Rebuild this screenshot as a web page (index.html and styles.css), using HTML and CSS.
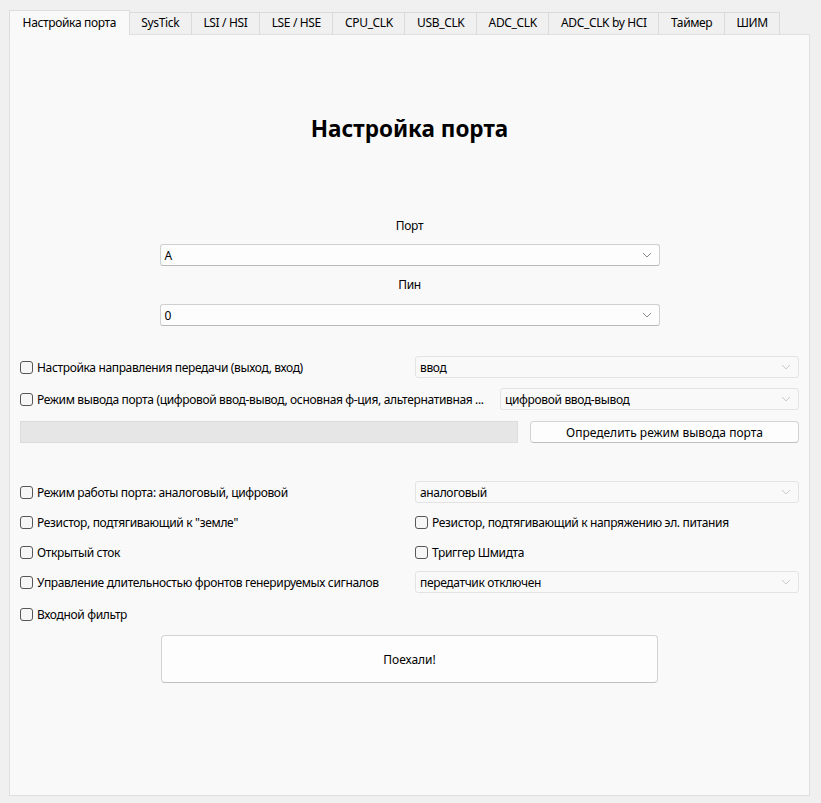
FILE: index.html
```html
<!DOCTYPE html>
<html lang="ru">
<head>
<meta charset="utf-8">
<title>Настройка порта</title>
<link rel="stylesheet" href="styles.css">
</head>
<body>
<div class="window">
  <div class="tabs">
    <div class="tab tab-active">Настройка порта</div>
    <div class="tab">SysTick</div>
    <div class="tab">LSI / HSI</div>
    <div class="tab">LSE / HSE</div>
    <div class="tab">CPU_CLK</div>
    <div class="tab">USB_CLK</div>
    <div class="tab">ADC_CLK</div>
    <div class="tab">ADC_CLK by HCI</div>
    <div class="tab">Таймер</div>
    <div class="tab">ШИМ</div>
  </div>
  <div class="pane">
    <h1 class="title">Настройка порта</h1>

    <div class="field-label label-port">Порт</div>
    <div class="combo combo-center"><span>A</span>
      <svg class="chev" width="10" height="6" viewBox="0 0 10 6"><path d="M1 1 L5 5 L9 1" fill="none" stroke="#8a8a8a" stroke-width="1"/></svg>
    </div>
    <div class="field-label label-pin">Пин</div>
    <div class="combo combo-center"><span>0</span>
      <svg class="chev" width="10" height="6" viewBox="0 0 10 6"><path d="M1 1 L5 5 L9 1" fill="none" stroke="#8a8a8a" stroke-width="1"/></svg>
    </div>

    <div class="row row-1">
      <label class="check"><span class="box"></span><span>Настройка направления передачи (выход, вход)</span></label>
      <div class="combo combo-off combo-right"><span>ввод</span>
        <svg class="chev" width="10" height="6" viewBox="0 0 10 6"><path d="M1 1 L5 5 L9 1" fill="none" stroke="#cacaca" stroke-width="1"/></svg>
      </div>
    </div>
    <div class="row row-2">
      <label class="check check-elide"><span class="box"></span><span>Режим вывода порта (цифровой ввод-вывод, основная ф-ция, альтернативная ...</span></label>
      <div class="combo combo-off combo-mode"><span>цифровой ввод-вывод</span>
        <svg class="chev" width="10" height="6" viewBox="0 0 10 6"><path d="M1 1 L5 5 L9 1" fill="none" stroke="#cacaca" stroke-width="1"/></svg>
      </div>
    </div>
    <div class="row row-3">
      <div class="progress"></div>
      <button class="btn btn-detect">Определить режим вывода порта</button>
    </div>

    <div class="row row-4">
      <label class="check"><span class="box"></span><span>Режим работы порта: аналоговый, цифровой</span></label>
      <div class="combo combo-off combo-right"><span>аналоговый</span>
        <svg class="chev" width="10" height="6" viewBox="0 0 10 6"><path d="M1 1 L5 5 L9 1" fill="none" stroke="#cacaca" stroke-width="1"/></svg>
      </div>
    </div>
    <div class="row row-pair">
      <label class="check"><span class="box"></span><span>Резистор, подтягивающий к "земле"</span></label>
      <label class="check"><span class="box"></span><span>Резистор, подтягивающий к напряжению эл. питания</span></label>
    </div>
    <div class="row row-pair">
      <label class="check"><span class="box"></span><span>Открытый сток</span></label>
      <label class="check"><span class="box"></span><span>Триггер Шмидта</span></label>
    </div>
    <div class="row row-7">
      <label class="check"><span class="box"></span><span>Управление длительностью фронтов генерируемых сигналов</span></label>
      <div class="combo combo-off combo-right"><span>передатчик отключен</span>
        <svg class="chev" width="10" height="6" viewBox="0 0 10 6"><path d="M1 1 L5 5 L9 1" fill="none" stroke="#cacaca" stroke-width="1"/></svg>
      </div>
    </div>
    <div class="row row-8">
      <label class="check"><span class="box"></span><span>Входной фильтр</span></label>
    </div>

    <button class="btn btn-go">Поехали!</button>
  </div>
</div>
</body>
</html>
```

FILE: styles.css
```css
* { box-sizing: border-box; }
html, body {
  margin: 0;
  padding: 0;
  background: #f0f0f0;
}
body {
  font-family: "Noto Sans", "Open Sans", "Liberation Sans", sans-serif;
  font-size: 12px;
  letter-spacing: -0.35px;
  color: #000;
  width: 821px;
  height: 803px;
  overflow: hidden;
}
.window {
  padding: 10px 11px 0 9px;
}
.tabs {
  display: flex;
  align-items: flex-end;
  height: 24px;
  position: relative;
  z-index: 2;
}
.tab {
  height: 22px;
  line-height: 20px;
  padding: 0 11.6px;
  border: 1px solid #dadada;
  border-bottom: none;
  background: #f0f0f0;
  margin-left: -1px;
  white-space: nowrap;
}
.tab:first-child { margin-left: 0; }
.tab-active {
  height: 25px;
  line-height: 23px;
  padding: 0 12.6px;
  background: #f9f9f9;
  border-color: #dcdcdc;
  margin-bottom: -1px;
  position: relative;
  z-index: 3;
}
.pane {
  height: 762px;
  background: #f9f9f9;
  border: 1px solid #e0e0e0;
  padding: 0 10px;
  display: flex;
  flex-direction: column;
  position: relative;
  z-index: 1;
}
.title {
  margin: 80px 0 0 0;
  font-size: 22.5px;
  font-weight: 700;
  letter-spacing: 0;
  line-height: 28px;
  text-align: center;
}
.field-label {
  text-align: center;
  line-height: 16px;
  height: 16px;
}
.label-port { margin-top: 75px; }
.label-pin { margin-top: 11px; }
.combo {
  height: 22px;
  display: flex;
  align-items: center;
  justify-content: space-between;
  padding: 0 7px 0 4px;
  background: #fdfdfd;
  border: 1px solid #d0d0d0;
  border-bottom-color: #b8b8b8;
  border-radius: 3px;
  white-space: nowrap;
}
.combo-center {
  width: 500px;
  align-self: center;
  margin-top: 10px;
}
.label-pin + .combo-center { margin-top: 11px; }
.combo-off {
  background: #f9f9f9;
  border-color: #e3e3e3;
}
.combo-right { width: 384px; flex: none; }
.combo-mode { width: 299px; flex: none; }
.chev { flex: none; }
.row {
  display: flex;
  align-items: center;
  height: 22px;
}
.row-1 { margin-top: 30px; }
.row-2 { margin-top: 10px; }
.row-3 { margin-top: 11px; gap: 12px; }
.row-4 { margin-top: 38px; }
.row-pair { margin-top: 8px; display: grid; grid-template-columns: 395px 384px; }
.row-7 { margin-top: 8px; }
.row-8 { margin-top: 10px; }
.check {
  flex: 1;
  display: flex;
  align-items: center;
  gap: 4px;
  white-space: nowrap;
  min-width: 0;
}
.check-elide { margin-right: 8px; }
.box {
  flex: none;
  width: 13px;
  height: 13px;
  border: 1px solid #575757;
  border-radius: 3px;
  background: #f6f6f6;
}
.progress {
  width: 498px;
  height: 22px;
  background: #e6e6e6;
  border: 1px solid #dcdcdc;
  flex: none;
}
.btn {
  font: inherit;
  color: #000;
  background: #fdfdfd;
  border: 1px solid #d3d3d3;
  border-bottom-color: #c0c0c0;
  border-radius: 4px;
  padding: 0;
}
.btn-detect {
  flex: 1;
  height: 22px;
}
.btn-go {
  margin-top: 10px;
  align-self: center;
  width: 497px;
  height: 48px;
}
```
